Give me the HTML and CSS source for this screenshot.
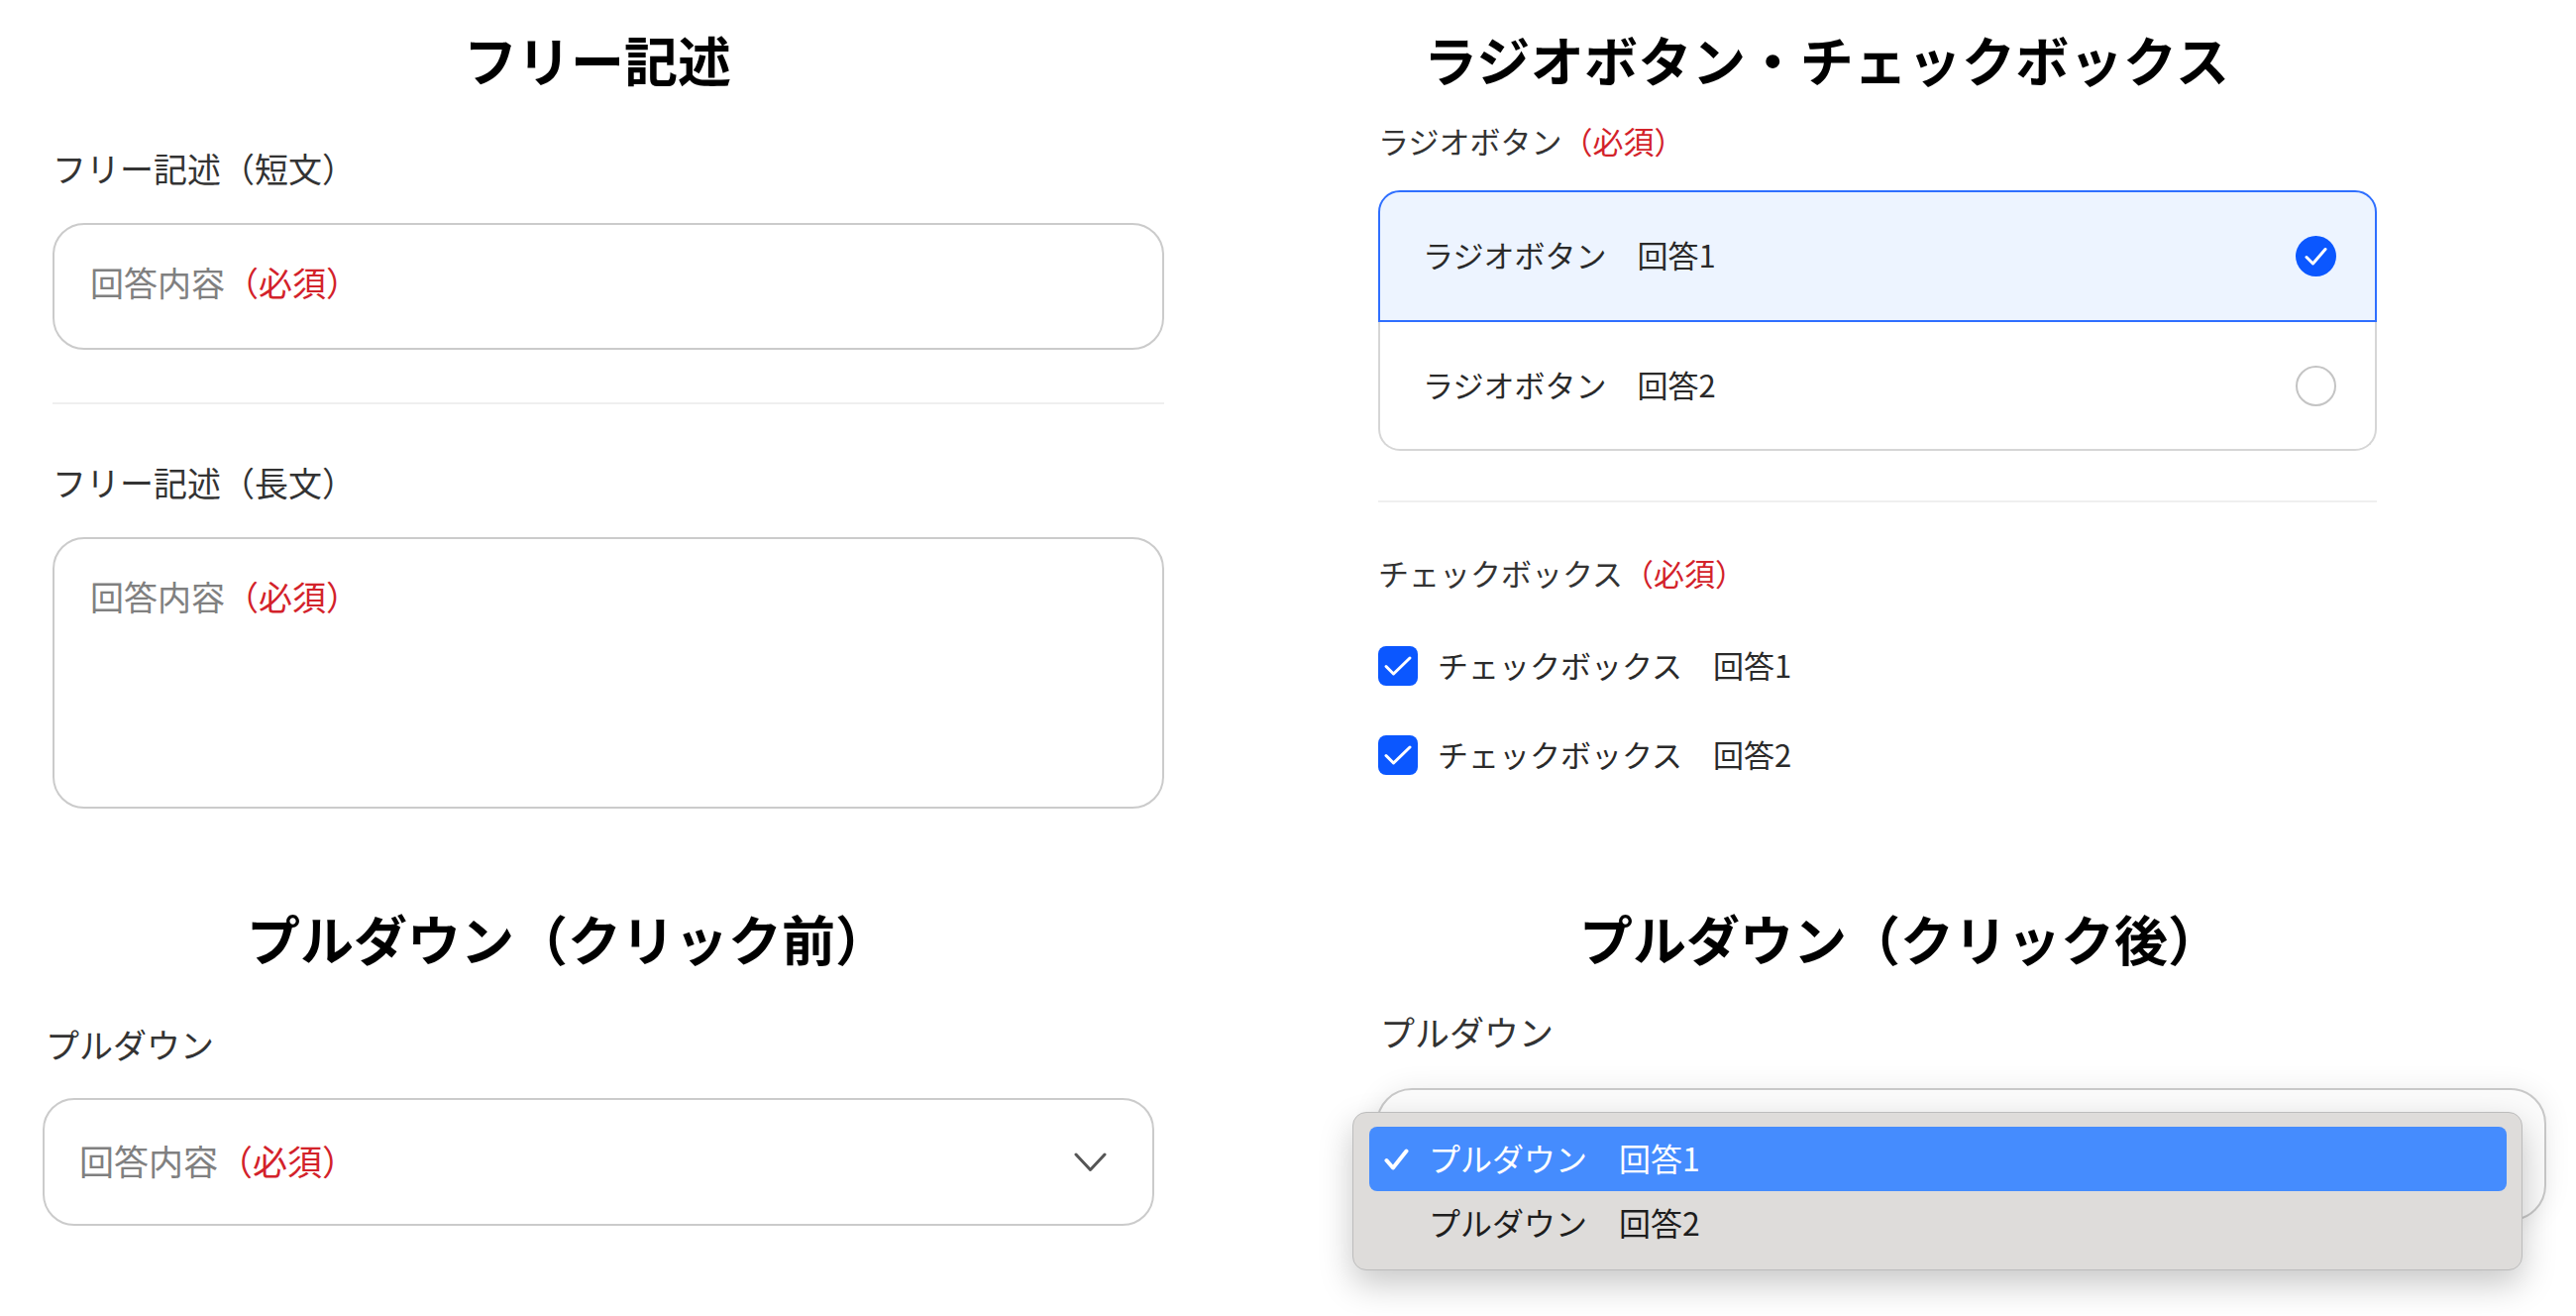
FILE: index.html
```html
<!DOCTYPE html>
<html lang="ja">
<head>
<meta charset="utf-8">
<title>フォーム部品</title>
<link rel="stylesheet" href="styles.css">
</head>
<body>
<main class="board">
  <section class="panel panel-free">
    <h2 class="title">フリー記述</h2>
    <div class="label label-short">フリー記述（短文）</div>
    <div class="textbox textbox-short"><span class="ph">回答内容</span><span class="req">（必須）</span></div>
    <hr class="divider">
    <div class="label label-long">フリー記述（長文）</div>
    <div class="textbox textbox-long"><span class="ph">回答内容</span><span class="req">（必須）</span></div>
  </section>

  <section class="panel panel-choice">
    <h2 class="title">ラジオボタン・チェックボックス</h2>
    <div class="choice-label radio-label">ラジオボタン<span class="req">（必須）</span></div>
    <div class="radio-group">
      <div class="radio-option is-selected">
        <span class="opt-text">ラジオボタン　回答1</span>
        <svg class="radio-icon" width="41" height="41" viewBox="0 0 41 41"><circle cx="20.5" cy="20.5" r="20.5" fill="#0b57ff"/><path d="M11 21.5 L17.5 28 L30 13.5" fill="none" stroke="#fff" stroke-width="3" stroke-linecap="round" stroke-linejoin="round"/></svg>
      </div>
      <div class="radio-option is-plain">
        <span class="opt-text">ラジオボタン　回答2</span>
        <span class="radio-empty"></span>
      </div>
    </div>
    <hr class="divider divider-choice">
    <div class="choice-label check-label">チェックボックス<span class="req">（必須）</span></div>
    <div class="check-list">
      <div class="check-item">
        <span class="check-box"><svg width="40" height="40" viewBox="0 0 40 40"><path d="M8 20.5 L15.5 28 L32 12" fill="none" stroke="#fff" stroke-width="3" stroke-linecap="round" stroke-linejoin="round"/></svg></span>
        <span class="opt-text">チェックボックス　回答1</span>
      </div>
      <div class="check-item">
        <span class="check-box"><svg width="40" height="40" viewBox="0 0 40 40"><path d="M8 20.5 L15.5 28 L32 12" fill="none" stroke="#fff" stroke-width="3" stroke-linecap="round" stroke-linejoin="round"/></svg></span>
        <span class="opt-text">チェックボックス　回答2</span>
      </div>
    </div>
  </section>

  <section class="panel panel-before">
    <h2 class="title">プルダウン（クリック前）</h2>
    <div class="pull-label pull-label-before">プルダウン</div>
    <div class="select">
      <span class="opt-text"><span class="ph">回答内容</span><span class="req">（必須）</span></span>
      <svg class="chevron" width="33" height="20" viewBox="0 0 33 20"><polyline points="2,2 16.5,17.5 31,2" fill="none" stroke="#555" stroke-width="3" stroke-linecap="round" stroke-linejoin="round"/></svg>
    </div>
  </section>

  <section class="panel panel-after">
    <h2 class="title">プルダウン（クリック後）</h2>
    <div class="pull-label pull-label-after">プルダウン</div>
    <div class="select-open">
      <div class="menu">
        <div class="menu-item is-active">
          <svg class="menu-check" width="25" height="22" viewBox="0 0 25 22"><path d="M2.5 12 L9 19.5 L22.5 2.5" fill="none" stroke="#fff" stroke-width="4" stroke-linecap="round" stroke-linejoin="round"/></svg>
          <span class="opt-text">プルダウン　回答1</span>
        </div>
        <div class="menu-item"><span class="opt-text">プルダウン　回答2</span></div>
      </div>
    </div>
  </section>
</main>
</body>
</html>
```

FILE: styles.css
```css
* { box-sizing: border-box; }
html, body { margin: 0; padding: 0; background: #fff; }
body {
  font-family: "Noto Sans CJK JP", "Noto Sans", sans-serif;
  color: #333;
}
.board {
  width: 2600px;
  height: 1328px;
  display: grid;
  grid-template-columns: 1300px 1300px;
  grid-template-rows: 880px 448px;
  overflow: hidden;
}
.panel { display: flex; flex-direction: column; }
.panel-free { padding: 0 125px 0 53px; }
.panel-choice { padding: 0 201px 0 91px; }
.panel-before { padding: 0 135px 0 43px; }
.panel-after { padding: 0 30px 0 89px; }

.title {
  margin: 0;
  font-size: 54px;
  font-weight: 700;
  line-height: 65px;
  color: #000;
  white-space: nowrap;
}
.panel-free .title { margin-top: 27px; padding-left: 415px; }
.panel-choice .title { margin-top: 27px; padding-left: 46px; letter-spacing: 0.4px; }
.panel-before .title { margin-top: 34px; padding-left: 206px; }
.panel-after .title { margin-top: 34px; padding-left: 205px; }

.ph { color: #808080; }
.req { color: #d3222a; }

.opt-text { margin-bottom: 4px; }

.label { font-size: 34px; line-height: 38px; color: #333; }
.label-short { margin-top: 59px; }
.label-long { margin-top: 60px; }

.textbox {
  margin-top: 36px;
  border: 2px solid #cbcbcb;
  border-radius: 32px;
  padding: 39px 36px 0;
  font-size: 34px;
  line-height: 38px;
}
.textbox-short { height: 128px; }
.textbox-long { height: 274px; }

.divider {
  margin: 53px 0 0;
  height: 2px;
  border: 0;
  background: #efefef;
}
.divider-choice { margin-top: 50px; }

.choice-label { font-size: 31px; line-height: 36px; color: #333; }
.radio-label { margin-top: 32px; }
.radio-group { margin-top: 32px; display: flex; flex-direction: column; }
.radio-option {
  display: flex;
  align-items: center;
  justify-content: space-between;
  padding: 0 39px 0 43px;
  font-size: 31px;
  color: #2a2a2a;
  border: 2px solid #d6d6d6;
}
.radio-option.is-selected {
  height: 133px;
  background: #edf4ff;
  border-color: #2f6fff;
  border-radius: 22px 22px 0 0;
}
.radio-option.is-plain {
  height: 130px;
  border-top: 0;
  border-radius: 0 0 22px 22px;
}
.radio-icon { display: block; }
.radio-empty {
  width: 41px;
  height: 41px;
  border: 2.5px solid #c4c4c4;
  border-radius: 50%;
  background: #fff;
}

.check-label { margin-top: 53px; }
.check-list { margin-top: 56px; display: flex; flex-direction: column; gap: 50px; }
.check-item {
  display: flex;
  align-items: center;
  gap: 20px;
  height: 40px;
  font-size: 31px;
  color: #2a2a2a;
}
.check-box {
  width: 40px;
  height: 40px;
  border-radius: 8px;
  background: #0b57ff;
  display: flex;
}

.pull-label { color: #333; }
.pull-label-before { margin-top: 56px; padding-left: 3px; font-size: 34px; line-height: 38px; }
.pull-label-after { margin-top: 42px; padding-left: 4px; font-size: 35px; line-height: 40px; }

.select {
  margin-top: 35px;
  height: 129px;
  border: 2px solid #cbcbcb;
  border-radius: 32px;
  display: flex;
  align-items: center;
  justify-content: space-between;
  padding: 0 46px 0 35px;
  font-size: 35px;
  line-height: 40px;
}
.chevron { display: block; }

.select-open {
  position: relative;
  margin-top: 37px;
  height: 134px;
  border: 2px solid #c8c8c8;
  border-radius: 36px;
  background: #fbfbfb;
  box-shadow: 0 0 28px rgba(0, 0, 0, 0.08);
}
.menu {
  position: absolute;
  left: -26px;
  top: 22px;
  width: 1181px;
  height: 160px;
  background: #dedcda;
  border: 1px solid #bcbcbc;
  border-radius: 14px;
  padding: 14px 15px 14px 16px;
  box-shadow: 0 14px 34px rgba(0, 0, 0, 0.22);
}
.menu-item {
  height: 65px;
  display: flex;
  align-items: center;
  font-size: 32px;
  color: #1e1e1e;
  padding-left: 60px;
  border-radius: 8px;
}
.menu-item.is-active {
  background: #458cfe;
  color: #fff;
  padding-left: 15px;
  gap: 20px;
}
.menu-check { display: block; }
```
